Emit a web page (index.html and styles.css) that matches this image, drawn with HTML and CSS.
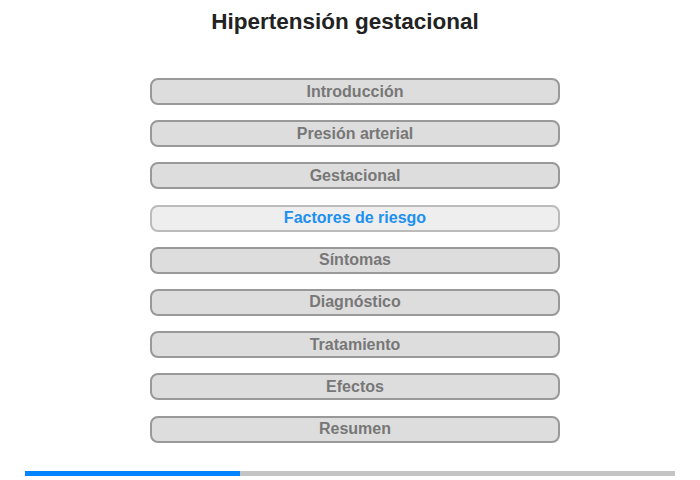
FILE: index.html
```html
<!DOCTYPE html>
<html lang="es">
<head>
  <meta charset="UTF-8">
  <title>Hipertensión gestacional</title>
  <link rel="stylesheet" href="styles.css">
</head>
<body>
  <h1 class="title">Hipertensión gestacional</h1>

  <div class="menu">
    <button class="item">Introducción</button>
    <button class="item">Presión arterial</button>
    <button class="item">Gestacional</button>
    <button class="item active">Factores de riesgo</button>
    <button class="item">Síntomas</button>
    <button class="item">Diagnóstico</button>
    <button class="item">Tratamiento</button>
    <button class="item">Efectos</button>
    <button class="item">Resumen</button>
  </div>

  <div class="progress">
    <div class="progress-fill" style="width: 33%"></div>
  </div>
</body>
</html>
```

FILE: styles.css
```css
body {
  font-family: "Liberation Sans", Arial, sans-serif;
  margin: 0;
  background: #fff;
}
.title {
  font-size: 22.5px;
  font-weight: bold;
  color: #222;
  text-align: center;
  margin: 9px 0 0 0;
  padding-right: 10px;
  line-height: 25px;
}
.menu {
  width: 410px;
  margin: 44px 0 0 150px;
  display: flex;
  flex-direction: column;
  gap: 15.2px;
}
.item {
  height: 27px;
  padding: 0;
  border: 2px solid #999;
  border-radius: 8px;
  background-color: #ddd;
  color: #777;
  font-family: inherit;
  font-size: 16px;
  font-weight: bold;
  cursor: pointer;
}
.item.active {
  background-color: #eee;
  border-color: #bbb;
  color: #2090f0;
}
.progress {
  width: 650px;
  height: 5px;
  margin: 28px auto 0;
  background-color: #c4c4c4;
}
.progress-fill {
  height: 100%;
  background-color: #0084ff;
}
```
